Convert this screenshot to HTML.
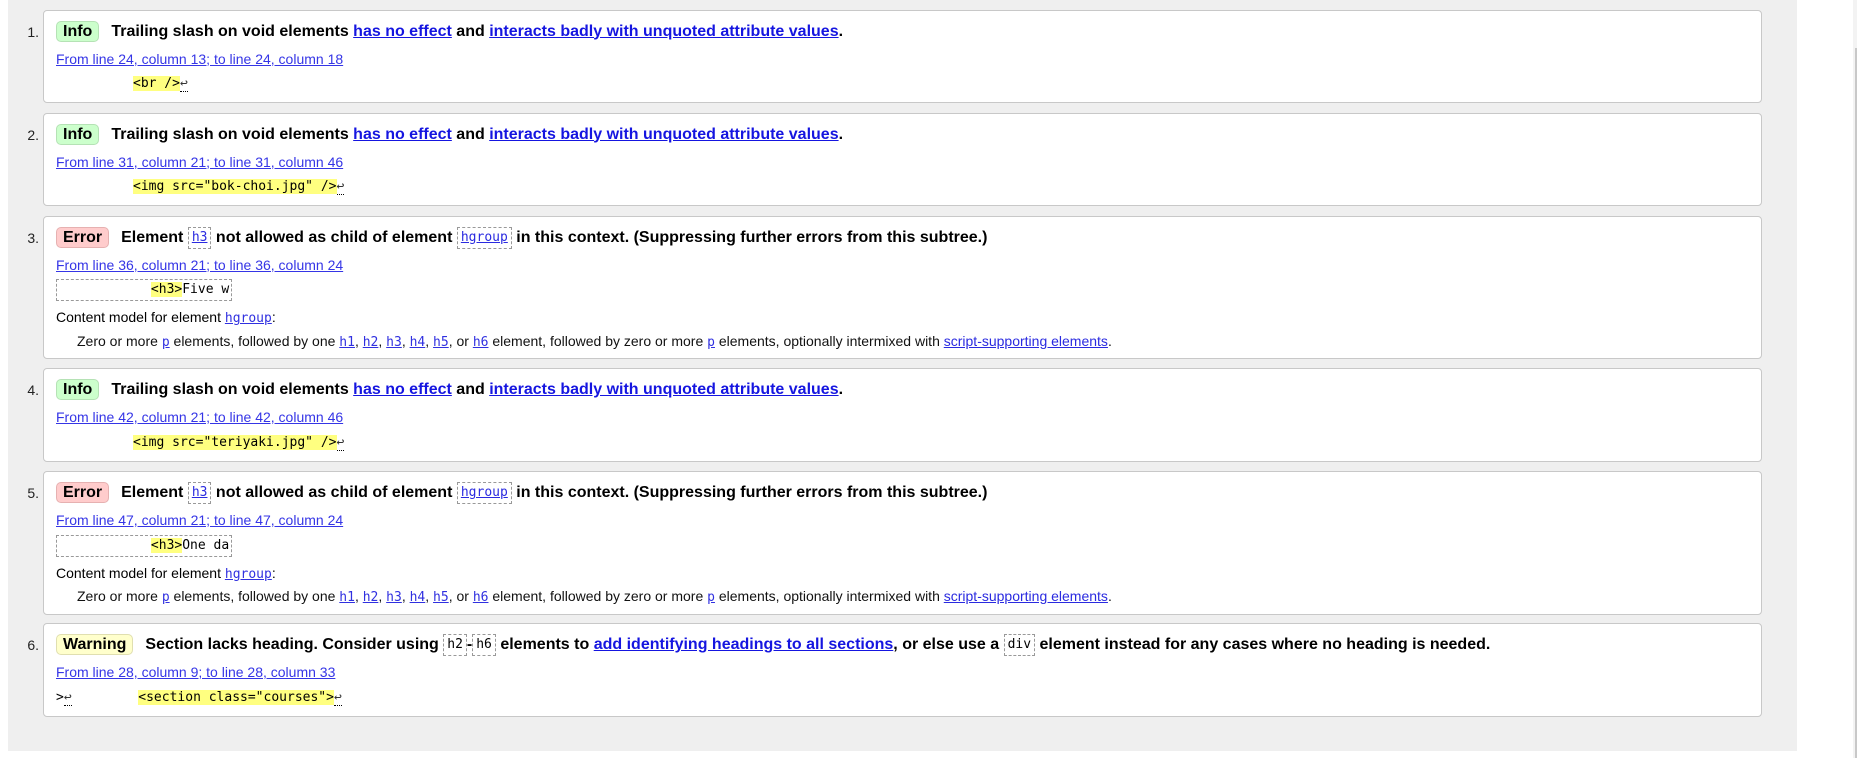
<!DOCTYPE html>
<html><head><meta charset="utf-8"><style>
*{box-sizing:border-box}
body{margin:0;width:1857px;height:758px;background:#fff;font-family:"Liberation Sans",Arial,sans-serif;color:#000;position:relative;overflow:hidden}
.gray{position:absolute;left:8px;top:0;width:1789px;height:751px;background:#efefef}
.sb1{position:absolute;left:1853px;top:0;width:4px;height:758px;background:#f3f3f3}
.sb2{position:absolute;left:1855px;top:48px;width:2px;height:710px;background:#c8c8c8}
.card{position:absolute;left:43px;width:1719px;background:#fff;border:1px solid #c8c8c8;border-radius:4px;padding:10px 12px 0 12px}
.num{position:absolute;left:-43px;width:38px;text-align:right;top:10px;line-height:22px;font-size:14px;color:#222}
.t{height:22px;line-height:22px;font-size:16px;font-weight:bold;white-space:nowrap}
.b{display:inline-block;height:21px;line-height:19px;padding:0 6px;border-radius:5px;border:1px solid;margin-right:12px;vertical-align:top;font-size:16px}
.info{background:#ccffcc;border-color:#b5e2b5}
.err{background:#ffcccc;border-color:#e6b1b1}
.warn{background:#ffffcc;border-color:#e0dfb0}
a{color:#0000ee;text-decoration:underline}
.t a{color:#1515e0}
.loc{margin-top:8px;line-height:17px;font-size:14px;white-space:nowrap}
.loc a{color:#3535e6}
.code{margin-top:6.5px;line-height:20px;height:20px;font-family:"DejaVu Sans Mono","Liberation Mono",monospace;font-size:13px;white-space:pre}
.hl{background:#ffff80}
.ret{border-bottom:1px dotted #000;color:#333}
.box{display:inline-block;margin-top:5.5px;height:22px;line-height:20px;border:1px dashed #999;font-family:"DejaVu Sans Mono","Liberation Mono",monospace;font-size:13px;white-space:pre;padding:0 2px 0 0}
.ic{display:inline-block;border:1px dashed #999;font-family:"DejaVu Sans Mono","Liberation Mono",monospace;font-size:13px;font-weight:normal;line-height:18px;height:22px;padding:1px 3px 0;vertical-align:top}
.ic a{color:#2a2ae0}
.cm{margin-top:8px;line-height:17px;font-size:14px;margin-left:0;white-space:nowrap}
.zm{margin-top:5.5px;line-height:17px;font-size:14px;margin-left:21px;white-space:nowrap;color:#111}
.cm .m,.zm .m{font-family:"DejaVu Sans Mono","Liberation Mono",monospace;font-size:13px;color:#3030e0}
.zm a{color:#2a2ae0}
</style></head><body>
<div class="gray"></div><div class="sb1"></div><div class="sb2"></div>

<div class="card" style="top:9.5px;height:93.5px"><div class="num">1.</div>
<div class="t"><span class="b info">Info</span>Trailing slash on void elements <a>has no effect</a> and <a>interacts badly with unquoted attribute values</a>.</div>
<div class="loc"><a>From line 24, column 13; to line 24, column 18</a></div>
<div class="code" style="margin-left:77px"><span class="hl">&lt;br /&gt;</span><span class="ret">↩</span></div>
</div>

<div class="card" style="top:112.5px;height:93.5px"><div class="num">2.</div>
<div class="t"><span class="b info">Info</span>Trailing slash on void elements <a>has no effect</a> and <a>interacts badly with unquoted attribute values</a>.</div>
<div class="loc"><a>From line 31, column 21; to line 31, column 46</a></div>
<div class="code" style="margin-left:77px"><span class="hl">&lt;img src="bok-choi.jpg" /&gt;</span><span class="ret">↩</span></div>
</div>

<div class="card" style="top:215.5px;height:143.5px"><div class="num">3.</div>
<div class="t"><span class="b err">Error</span>Element <span class="ic"><a>h3</a></span> not allowed as child of element <span class="ic"><a>hgroup</a></span> in this context. (Suppressing further errors from this subtree.)</div>
<div class="loc"><a>From line 36, column 21; to line 36, column 24</a></div>
<div class="box">            <span class="hl">&lt;h3&gt;</span>Five w</div>
<div class="cm">Content model for element <a class="m">hgroup</a>:</div>
<div class="zm">Zero or more <a class="m">p</a> elements, followed by one <a class="m">h1</a>, <a class="m">h2</a>, <a class="m">h3</a>, <a class="m">h4</a>, <a class="m">h5</a>, or <a class="m">h6</a> element, followed by zero or more <a class="m">p</a> elements, optionally intermixed with <a>script-supporting elements</a>.</div>
</div>

<div class="card" style="top:368px;height:94px"><div class="num">4.</div>
<div class="t"><span class="b info">Info</span>Trailing slash on void elements <a>has no effect</a> and <a>interacts badly with unquoted attribute values</a>.</div>
<div class="loc"><a>From line 42, column 21; to line 42, column 46</a></div>
<div class="code" style="margin-left:77px"><span class="hl">&lt;img src="teriyaki.jpg" /&gt;</span><span class="ret">↩</span></div>
</div>

<div class="card" style="top:471px;height:143.5px"><div class="num">5.</div>
<div class="t"><span class="b err">Error</span>Element <span class="ic"><a>h3</a></span> not allowed as child of element <span class="ic"><a>hgroup</a></span> in this context. (Suppressing further errors from this subtree.)</div>
<div class="loc"><a>From line 47, column 21; to line 47, column 24</a></div>
<div class="box">            <span class="hl">&lt;h3&gt;</span>One da</div>
<div class="cm">Content model for element <a class="m">hgroup</a>:</div>
<div class="zm">Zero or more <a class="m">p</a> elements, followed by one <a class="m">h1</a>, <a class="m">h2</a>, <a class="m">h3</a>, <a class="m">h4</a>, <a class="m">h5</a>, or <a class="m">h6</a> element, followed by zero or more <a class="m">p</a> elements, optionally intermixed with <a>script-supporting elements</a>.</div>
</div>

<div class="card" style="top:623px;height:94px"><div class="num">6.</div>
<div class="t"><span class="b warn">Warning</span>Section lacks heading. Consider using <span class="ic">h2</span>-<span class="ic">h6</span> elements to <a>add identifying headings to all sections</a>, or else use a <span class="ic">div</span> element instead for any cases where no heading is needed.</div>
<div class="loc"><a>From line 28, column 9; to line 28, column 33</a></div>
<div class="code" style="margin-left:0">&gt;<span class="ret">↩</span>        <span class="hl" style="margin-left:4px">&lt;section class="courses"&gt;</span><span class="ret">↩</span></div>
</div>
</body></html>
